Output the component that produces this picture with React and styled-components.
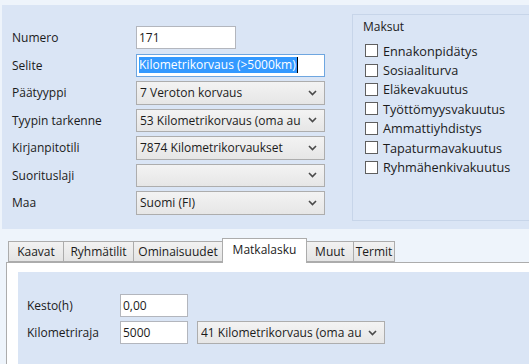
import React from 'react'
import styled, { createGlobalStyle } from 'styled-components'

const GlobalStyle = createGlobalStyle`
  body {
    margin: 0;
    background: #f1f6fc;
    font-family: "Open Sans", "Noto Sans", sans-serif;
    font-size: 12px;
    color: #1b1b1b;
  }
`

const Window = styled.div`
  width: 529px;
  height: 364px;
  overflow: hidden;
  background: #eef4fb;
  display: flex;
  flex-direction: column;
`

const TopPanel = styled.div`
  margin: 5px 0 0 2px;
  height: 224px;
  flex-shrink: 0;
  background: #dae5f5;
  display: flex;
`

const Form = styled.div`
  box-sizing: border-box;
  width: 350px;
  padding: 21px 0 0 10px;
  display: grid;
  grid-template-columns: 124px auto;
  grid-auto-rows: 23.5px;
  row-gap: 4px;
  align-items: center;
  align-content: start;
`

const Label = styled.label`
  white-space: nowrap;
`

const TextInput = styled.div`
  box-sizing: border-box;
  width: ${p => p.$width}px;
  height: 23px;
  background: #fff;
  border: 1px solid ${p => (p.$focused ? '#6ea6e0' : '#b3b6bd')};
  padding: 0 2px;
  display: flex;
  align-items: center;
  white-space: nowrap;
  overflow: hidden;
`

const Selected = styled.span`
  background: #3399ff;
  color: #fff;
  line-height: 16px;
  padding-right: 1px;
  border-right: 1px solid #000;
`

const Combo = styled.div`
  box-sizing: border-box;
  width: ${p => p.$width}px;
  height: 23.5px;
  background: linear-gradient(#f3f3f3, #e6e6e6);
  border: 1px solid #adadad;
  padding: 0 7px 0 3px;
  display: flex;
  align-items: center;
  gap: 4px;
`

const ComboText = styled.span`
  flex: 1;
  overflow: hidden;
  white-space: nowrap;
`

const GroupBox = styled.div`
  flex: 1;
  margin-top: 9px;
  height: 201px;
  border: 1px solid #c7d5e9;
  border-right: none;
  padding: 4px 0 0 12px;
`

const GroupTitle = styled.div`
  margin-left: -2px;
  line-height: 16px;
  margin-bottom: 6px;
`

const CheckRow = styled.div`
  height: 19.4px;
  display: flex;
  align-items: center;
  gap: 5px;
  font-size: 12.7px;
`

const Box = styled.span`
  box-sizing: border-box;
  width: 13px;
  height: 13px;
  background: #fff;
  border: 1px solid #5f5f5f;
`

const TabArea = styled.div`
  flex: 1;
  margin-top: 9px;
  display: flex;
  flex-direction: column;
`

const TabStrip = styled.div`
  height: 24px;
  padding-left: 8px;
  display: flex;
  align-items: flex-end;
`

const Tab = styled.div`
  box-sizing: border-box;
  position: relative;
  width: ${p => p.$w}px;
  height: ${p => (p.$active ? 25 : 21)}px;
  margin-right: -1px;
  margin-bottom: ${p => (p.$active ? -1 : 0)}px;
  z-index: ${p => (p.$active ? 1 : 0)};
  border: 1px solid #acacac;
  border-bottom: ${p => (p.$active ? 'none' : '1px solid #acacac')};
  background: ${p => (p.$active ? '#fff' : 'linear-gradient(#f2f2f2, #e4e4e4)')};
  display: flex;
  align-items: center;
  justify-content: center;
  padding-bottom: ${p => (p.$active ? 4 : 0)}px;
  white-space: nowrap;
`

const TabPanel = styled.div`
  flex: 1;
  margin-left: 6px;
  border-top: 1px solid #acacac;
  border-left: 1px solid #acacac;
  background: #fff;
  padding: 9px 0 0 11px;
  display: flex;
`

const TabBody = styled.div`
  flex: 1;
  background: #dae5f5;
  padding: 22px 0 0 9px;
  display: grid;
  grid-template-columns: 84px 68px auto;
  grid-auto-rows: 23px;
  row-gap: 4px;
  column-gap: 9px;
  align-items: center;
  align-content: start;
`

function Chevron() {
  return (
    <svg width="9" height="6" viewBox="0 0 9 6">
      <polyline points="1,1 4.5,4.6 8,1" fill="none" stroke="#4a4a4a" strokeWidth="1.6" />
    </svg>
  )
}

function Select({ width, value }) {
  return (
    <Combo $width={width}>
      <ComboText>{value}</ComboText>
      <Chevron />
    </Combo>
  )
}

const charges = [
  'Ennakonpidätys',
  'Sosiaaliturva',
  'Eläkevakuutus',
  'Työttömyysvakuutus',
  'Ammattiyhdistys',
  'Tapaturmavakuutus',
  'Ryhmähenkivakuutus',
]

const tabs = [
  { label: 'Kaavat', w: 56 },
  { label: 'Ryhmätilit', w: 71 },
  { label: 'Ominaisuudet', w: 90 },
  { label: 'Matkalasku', w: 85, active: true },
  { label: 'Muut', w: 48 },
  { label: 'Termit', w: 42 },
]

export default function App() {
  return (
    <Window>
      <GlobalStyle />
      <TopPanel>
        <Form>
          <Label>Numero</Label>
          <TextInput $width={100}>171</TextInput>
          <Label>Selite</Label>
          <TextInput $width={189} $focused>
            <Selected>Kilometrikorvaus (&gt;5000km)</Selected>
          </TextInput>
          <Label>Päätyyppi</Label>
          <Select width={189} value="7 Veroton korvaus" />
          <Label>Tyypin tarkenne</Label>
          <Select width={189} value="53 Kilometrikorvaus (oma au" />
          <Label>Kirjanpitotili</Label>
          <Select width={189} value="7874 Kilometrikorvaukset" />
          <Label>Suorituslaji</Label>
          <Select width={189} value="" />
          <Label>Maa</Label>
          <Select width={189} value="Suomi (FI)" />
        </Form>
        <GroupBox>
          <GroupTitle>Maksut</GroupTitle>
          {charges.map(c => (
            <CheckRow key={c}>
              <Box />
              <span>{c}</span>
            </CheckRow>
          ))}
        </GroupBox>
      </TopPanel>
      <TabArea>
        <TabStrip>
          {tabs.map(t => (
            <Tab key={t.label} $w={t.w} $active={t.active}>
              {t.label}
            </Tab>
          ))}
        </TabStrip>
        <TabPanel>
          <TabBody>
            <Label>Kesto(h)</Label>
            <TextInput $width={68}>0,00</TextInput>
            <span />
            <Label>Kilometriraja</Label>
            <TextInput $width={68}>5000</TextInput>
            <Select width={188} value="41 Kilometrikorvaus (oma au" />
          </TabBody>
        </TabPanel>
      </TabArea>
    </Window>
  )
}
